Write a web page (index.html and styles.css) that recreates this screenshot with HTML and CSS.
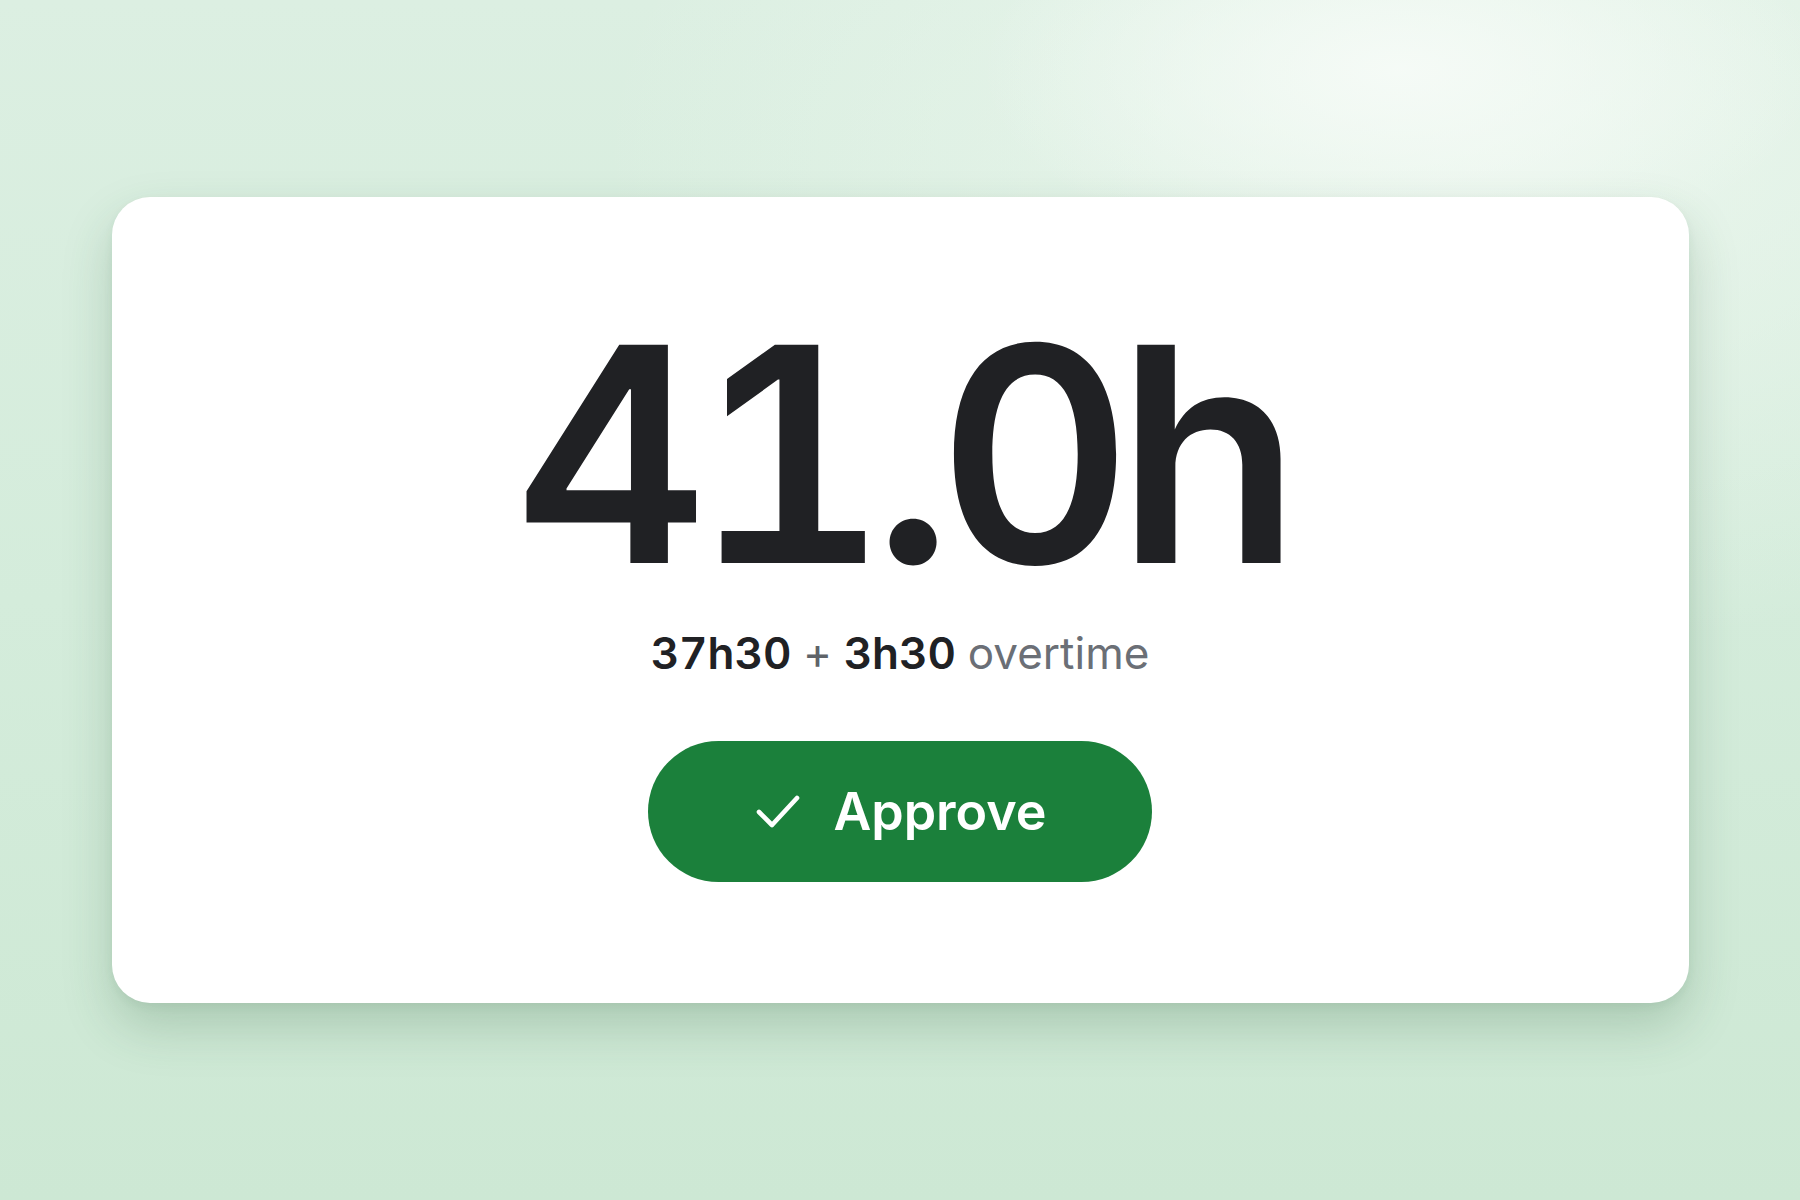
FILE: index.html
```html
<!DOCTYPE html>
<html>
<head>
<meta charset="utf-8">
<title>Timesheet total</title>
<link rel="stylesheet" href="styles.css">
</head>
<body>
<div class="page">
    <div class="card">
        <div class="total">41.0h</div>
        <div class="detail"><b>37h30</b> <span class="plus">+</span> <b>3h30</b> <span class="muted">overtime</span></div>
        <button class="approve" type="button">
            <svg class="check" width="48" height="38" viewBox="0 0 48 38"><path d="M6 19 L19 32 L44 5" fill="none" stroke="#fff" stroke-width="4.6" stroke-linecap="round" stroke-linejoin="round"/></svg>
            <span>Approve</span>
        </button>
    </div>
</div>
</body>
</html>
```
FILE: styles.css
```css
html,body{margin:0;padding:0;}
body{font-family:Inter,"Noto Sans",sans-serif;color:#202124;}
.page{width:1800px;height:1200px;display:flex;align-items:center;justify-content:center;
  background:
    radial-gradient(ellipse 420px 200px at 1400px 70px,rgba(246,251,247,0.95),rgba(246,251,247,0) 100%),
    radial-gradient(ellipse 900px 500px at 1500px 150px,rgba(238,248,240,0.8),rgba(238,248,240,0) 100%),
    linear-gradient(180deg,#dcefe2 0%,#d4ecdb 50%,#cde8d4 100%);}
.card{width:1577px;height:806px;box-sizing:border-box;background:#fff;border-radius:38px;
  box-shadow:0 24px 50px rgba(40,90,55,0.22),0 4px 10px rgba(40,90,55,0.06);
  display:flex;flex-direction:column;align-items:center;padding-top:83px;}
.total{font-size:300px;line-height:1.16;font-weight:600;letter-spacing:-0.05em;font-variant-numeric:tabular-nums;}
.detail{margin-top:1px;font-size:44px;line-height:1.1;font-variant-numeric:tabular-nums;}
.detail b{font-weight:600;}
.plus{color:#5f6368;}
.muted{color:#6b6f76;}
.approve{margin-top:64px;width:504px;height:141px;border:0;border-radius:71px;background:#1b803b;color:#fff;
  display:flex;align-items:center;justify-content:center;gap:32px;font-family:Inter,sans-serif;font-size:52px;font-weight:600;cursor:pointer;padding:0;}
.check{display:block;}
```
